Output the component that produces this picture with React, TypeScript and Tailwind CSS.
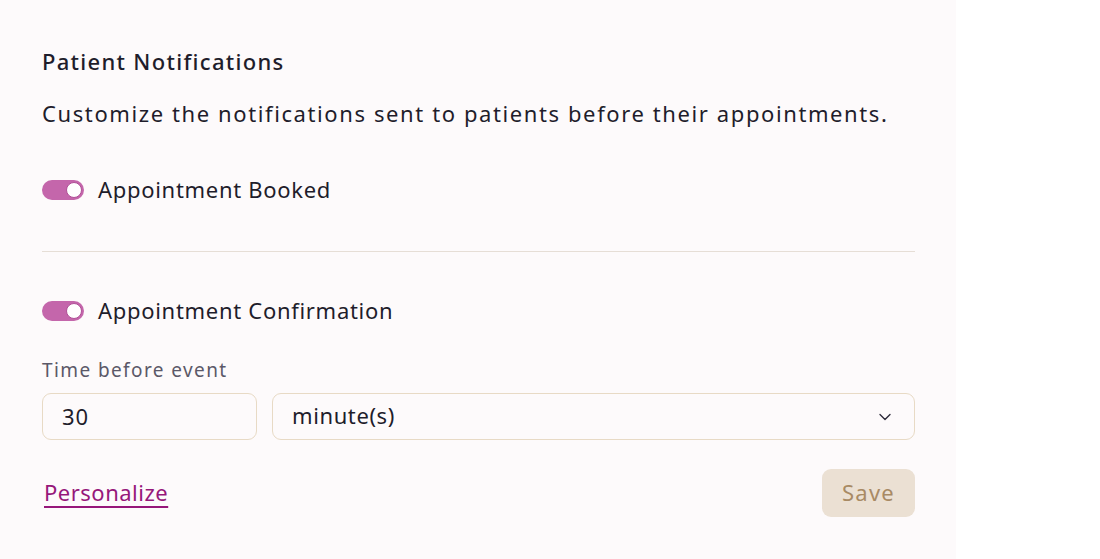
import { ChevronDown } from 'lucide-react';

function Toggle() {
  return (
    <span className="relative inline-flex h-5 w-[42px] shrink-0 items-center rounded-full bg-[#c466ab]">
      <span className="absolute right-[2px] h-4 w-4 rounded-full border border-[#b04f97] bg-white" />
    </span>
  );
}

export default function App() {
  return (
    <div className="flex min-h-[559px] w-full bg-white font-['Noto_Sans',sans-serif] text-[#1f1d2b]">
      <div className="w-[956px] bg-[#fdfafb] pl-[42px] pr-[41px] pt-[46px]">
        <h2 className="text-[22px] font-medium leading-[30px] tracking-[1.3px]">Patient Notifications</h2>
        <p className="mt-[22px] text-[22px] leading-[30px] tracking-[1.6px]">
          Customize the notifications sent to patients before their appointments.
        </p>

        <div className="mt-[47px] flex items-center gap-[14px]">
          <Toggle />
          <span className="relative -top-px text-[22px] leading-[30px] tracking-[0.7px]">Appointment Booked</span>
        </div>

        <div className="mt-[46px] h-px bg-[#e6ded6]" />

        <div className="mt-[44px] flex items-center gap-[14px]">
          <Toggle />
          <span className="relative -top-px text-[22px] leading-[30px] tracking-[0.7px]">Appointment Confirmation</span>
        </div>

        <label className="mt-[31px] block text-[19px] leading-[26px] tracking-[1.4px] text-[#5b5868]">
          Time before event
        </label>
        <div className="mt-[10px] flex gap-[15px]">
          <input
            type="text"
            defaultValue="30"
            className="h-[47px] w-[215px] rounded-[9px] border-[1.5px] border-[#e8dac5] bg-[#fdfafb] px-[19px] pb-px text-[22px] tracking-[1px] outline-none"
          />
          <div className="flex h-[47px] flex-1 items-center justify-between rounded-[9px] border-[1.5px] border-[#e8dac5] pl-[19px] pr-[19px]">
            <span className="relative -top-px text-[22px] tracking-[0.6px]">minute(s)</span>
            <ChevronDown className="h-5 w-5 text-[#2d2a3a]" strokeWidth={1.6} />
          </div>
        </div>

        <div className="mt-[29px] flex items-center justify-between">
          <a
            href="#"
            className="relative -top-px ml-[2px] text-[22px] tracking-[0.5px] text-[#96177a] underline decoration-[2px] underline-offset-[5px]"
          >
            Personalize
          </a>
          <button className="h-[48px] w-[93px] rounded-[9px] bg-[#ebe0d3] pb-px text-[22px] tracking-[1.2px] text-[#a88a64]">
            Save
          </button>
        </div>
      </div>
      <div className="flex-1" />
    </div>
  );
}
